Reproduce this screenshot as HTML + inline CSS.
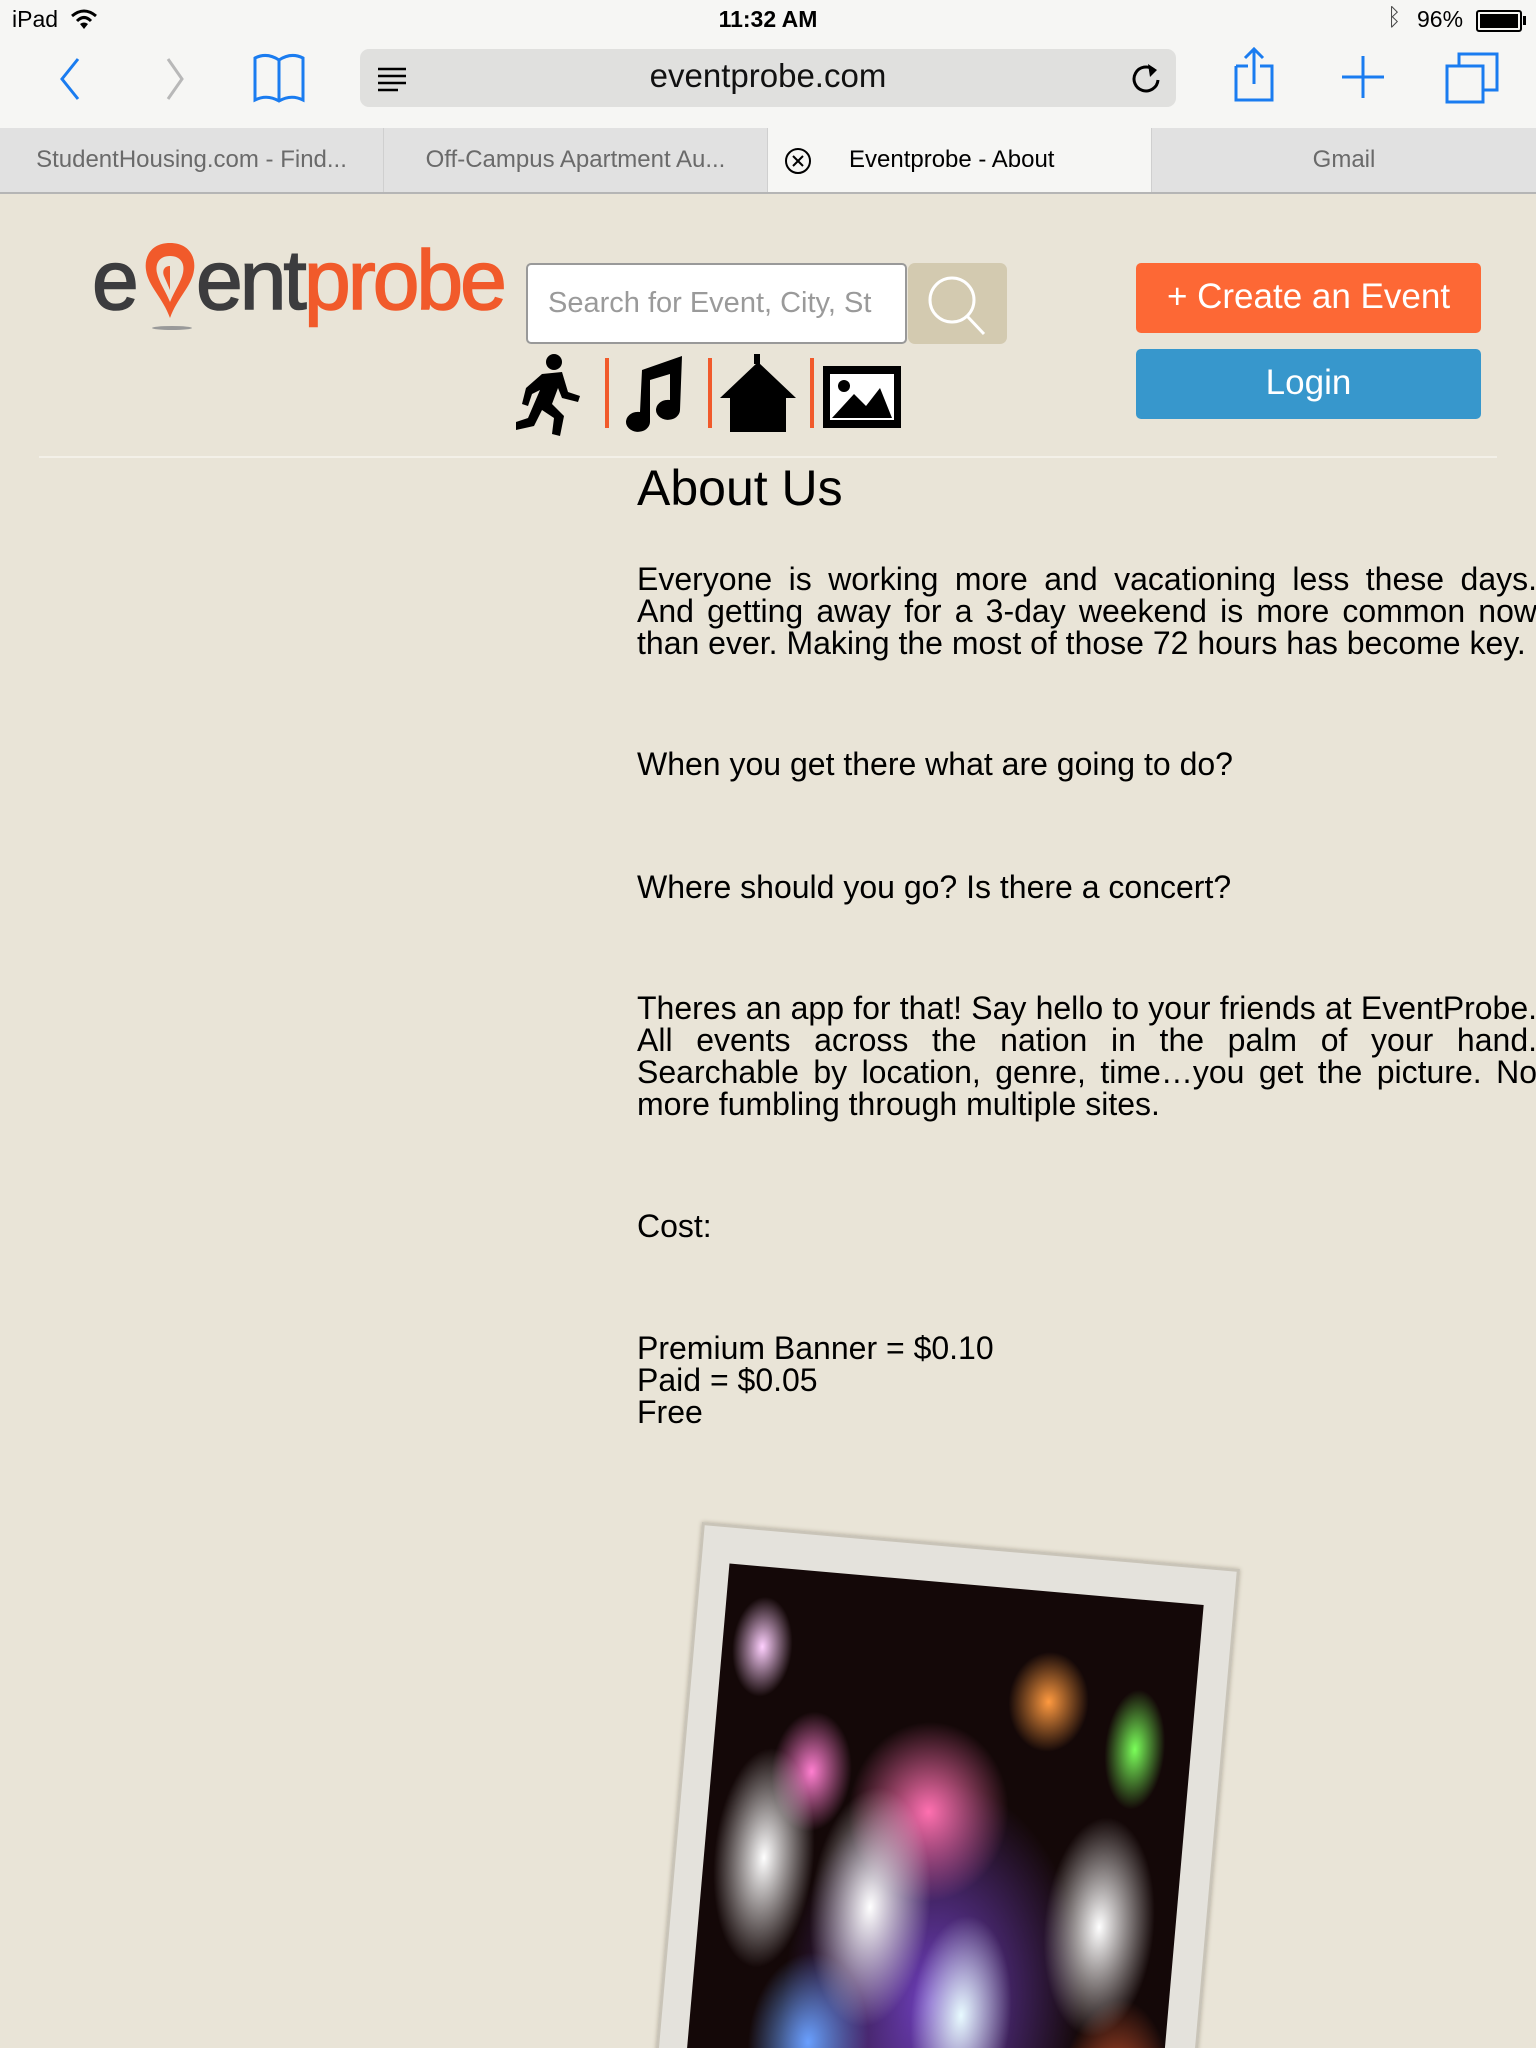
<!DOCTYPE html>
<html><head><meta charset="utf-8">
<style>
*{margin:0;padding:0;box-sizing:border-box}
html,body{width:1536px;height:2048px;overflow:hidden}
body{background:#e9e4d7;font-family:"Liberation Sans",Arial,sans-serif;position:relative;color:#000}
.abs{position:absolute}
#chrome{left:0;top:0;width:1536px;height:128px;background:#f6f6f4}
#tabs{left:0;top:128px;width:1536px;height:66px;background:#e1e1e1;border-bottom:2px solid #b5b5b5}
.tab{position:absolute;top:0;height:64px;line-height:64px;font-size:24px;color:#6a6a6a;text-align:center;border-right:1px solid #cfcfcf}
.p{position:absolute;left:637px;width:900px;font-size:32px;line-height:32px}
.j{text-align:justify;text-align-last:justify;display:block}
.lg{position:absolute;top:238px;font-size:84px;line-height:84px;letter-spacing:-3px;-webkit-text-stroke:1.5px currentColor;white-space:nowrap}
</style></head><body>
<div id="chrome" class="abs">
  <div class="abs" style="left:12px;top:6px;font-size:23px">iPad</div>
  <svg class="abs" style="left:70px;top:8px" width="28" height="24" viewBox="0 0 28 24"><path d="M2 8 Q14 -2 26 8" stroke="#000" stroke-width="3" fill="none"/><path d="M7 13 Q14 6 21 13" stroke="#000" stroke-width="3" fill="none"/><path d="M14 21 L10 16 Q14 13 18 16 Z" fill="#000"/></svg>
  <div class="abs" style="left:0;width:1536px;top:6px;text-align:center;font-size:23px;font-weight:bold">11:32 AM</div>
  <div class="abs" style="left:1387px;top:4px;font-size:24px;color:#444">&#x16D2;</div>
  <div class="abs" style="left:1417px;top:6px;font-size:23px">96%</div>
  <div class="abs" style="left:1476px;top:10px;width:46px;height:22px;border:2px solid #000;border-radius:3px;padding:2px"><div style="width:100%;height:100%;background:#000"></div></div>
  <div class="abs" style="left:1523px;top:16px;width:3px;height:9px;background:#000"></div>
  <svg class="abs" style="left:50px;top:55px" width="90" height="50"><path d="M28 4 L12 24 L28 44" stroke="#1a7cf0" stroke-width="3" fill="none"/></svg>
  <svg class="abs" style="left:160px;top:55px" width="30" height="50"><path d="M8 4 L22 24 L8 44" stroke="#b8b8b8" stroke-width="3" fill="none"/></svg>
  <svg class="abs" style="left:252px;top:52px" width="56" height="52"><path d="M3 6 Q15 0 27 8 Q39 0 51 6 L51 48 Q39 42 27 49 Q15 42 3 48 Z M27 8 L27 49" stroke="#1a7cf0" stroke-width="3" fill="none"/></svg>
  <div class="abs" style="left:360px;top:49px;width:816px;height:58px;background:#e0e0de;border-radius:9px"></div>
  <svg class="abs" style="left:376px;top:66px" width="32" height="26"><path d="M2 3H30M2 10H30M2 17H30M2 24H22" stroke="#000" stroke-width="2.5"/></svg>
  <div class="abs" style="left:360px;width:816px;top:57px;text-align:center;font-size:33px;color:#111">eventprobe.com</div>
  <svg class="abs" style="left:1128px;top:60px" width="36" height="36"><path d="M26 10 A12 12 0 1 0 30 20" stroke="#000" stroke-width="3" fill="none"/><path d="M20 4 L29 10 L22 17" fill="#000"/></svg>
  <svg class="abs" style="left:1230px;top:46px" width="48" height="60"><path d="M6 20 L6 54 L42 54 L42 20 L30 20 M18 20 L6 20" stroke="#1a7cf0" stroke-width="3" fill="none"/><path d="M24 4 L24 38 M15 12 L24 3 L33 12" stroke="#1a7cf0" stroke-width="3" fill="none"/></svg>
  <svg class="abs" style="left:1340px;top:54px" width="46" height="46"><path d="M23 2 V44 M2 23 H44" stroke="#1a7cf0" stroke-width="3"/></svg>
  <svg class="abs" style="left:1445px;top:50px" width="56" height="56"><rect x="2" y="16" width="36" height="36" stroke="#1a7cf0" stroke-width="3" fill="#f6f6f4"/><path d="M14 16 V4 H52 V40 H38" stroke="#1a7cf0" stroke-width="3" fill="none"/></svg>
</div>
<div id="tabs" class="abs">
  <div class="tab" style="left:0;width:384px">StudentHousing.com - Find...</div>
  <div class="tab" style="left:384px;width:384px">Off-Campus Apartment Au...</div>
  <div class="tab" style="left:768px;width:384px;background:#f6f6f4;color:#000;text-align:left;padding-left:81px">Eventprobe - About</div>
  <svg class="abs" style="left:783px;top:18px" width="30" height="30"><circle cx="15" cy="15" r="12" stroke="#000" stroke-width="2" fill="none"/><path d="M10 10 L20 20 M20 10 L10 20" stroke="#000" stroke-width="2"/></svg>
  <div class="tab" style="left:1152px;width:384px;border:none">Gmail</div>
</div>

<!-- logo -->
<div class="lg" style="left:92px;color:#3c3c3e">e</div>
<div class="lg" style="left:196px;color:#3c3c3e">ent</div>
<div class="lg" style="left:304px;color:#f15a2b">probe</div>
<svg class="abs" style="left:142px;top:240px" width="56" height="92"><path d="M28 3 C9 3 2 17 4 30 C6 46 21 58 28 78 C35 58 50 46 52 30 C54 17 47 3 28 3 Z" fill="#f15a2b"/><path d="M28 16 C17 16 13 24 15 33 C17 42 23 50 28 62 C33 50 39 42 41 33 C43 24 39 16 28 16 Z" fill="#e9e4d7"/><path d="M28 26 C22 26 20 31 22 36 L28 50 L28 26Z" fill="#f15a2b"/><ellipse cx="30" cy="88" rx="20" ry="2" fill="#999"/></svg>

<!-- search -->
<div class="abs" style="left:526px;top:263px;width:381px;height:81px;background:#fff;border:2px solid #999;border-radius:5px;font-size:29px;color:#9a9a9a;line-height:77px;padding-left:20px;overflow:hidden;white-space:nowrap">Search for Event, City, St</div>
<div class="abs" style="left:908px;top:263px;width:99px;height:81px;background:#d3cab0;border-radius:7px"></div>
<svg class="abs" style="left:920px;top:270px" width="80" height="70"><circle cx="32" cy="30" r="22" stroke="#fff" stroke-width="3" fill="none"/><path d="M47 46 L64 64" stroke="#fff" stroke-width="3"/></svg>

<!-- category icons -->
<svg class="abs" style="left:514px;top:352px" width="400" height="86" viewBox="0 0 400 86">
  <circle cx="40" cy="10" r="8" fill="#000"/>
  <path d="M28 22 L48 20 L54 40 L66 44 L64 50 L48 46 L44 36 L38 52 L50 64 L46 84 L38 82 L40 66 L28 58 L20 74 L2 78 L2 70 L14 66 L26 38 L18 42 L14 54 L8 52 L12 36 Z" fill="#000"/>
  <rect x="91" y="6" width="4" height="70" fill="#f15a2b"/>
  <path d="M128 18 L168 4 L166 58 A12 10 0 1 1 156 48 L156 22 L136 28 L136 70 A12 10 0 1 1 126 60 Z" fill="#000"/>
  <rect x="194" y="6" width="4" height="70" fill="#f15a2b"/>
  <path d="M206 46 L244 10 L282 46 L272 46 L272 80 L216 80 L216 46 Z" fill="#000"/><rect x="240" y="2" width="6" height="10" fill="#000"/>
  <rect x="296" y="6" width="4" height="70" fill="#f15a2b"/>
  <rect x="309" y="14" width="78" height="62" fill="#000"/>
  <rect x="316" y="22" width="64" height="46" fill="#fff"/>
  <path d="M318 66 L340 42 L352 54 L366 36 L378 66 Z" fill="#000"/><circle cx="330" cy="34" r="6" fill="#000"/>
</svg>

<!-- buttons -->
<div class="abs" style="left:1136px;top:263px;width:345px;height:70px;background:#fd6835;border-radius:5px;color:#fff;font-size:35px;line-height:68px;text-align:center">+ Create an Event</div>
<div class="abs" style="left:1136px;top:349px;width:345px;height:70px;background:#3797cc;border-radius:5px;color:#fff;font-size:35px;line-height:68px;text-align:center">Login</div>

<div class="abs" style="left:39px;top:456px;width:1458px;height:2px;background:#f3f0e8"></div>

<div class="abs" style="left:637px;top:458px;font-size:50px;line-height:60px">About Us</div>

<div class="p" style="top:563px"><span class="j">Everyone is working more and vacationing less these days.</span><span class="j">And getting away for a 3-day weekend is more common now</span><span style="display:block;white-space:nowrap">than ever. Making the most of those 72 hours has become key.</span></div>
<div class="p" style="top:748px">When you get there what are going to do?</div>
<div class="p" style="top:871px">Where should you go? Is there a concert?</div>
<div class="p" style="top:992px"><span class="j" style="white-space:nowrap;text-align:left">Theres an app for that! Say hello to your friends at EventProbe.</span><span class="j">All events across the nation in the palm of your hand.</span><span class="j">Searchable by location, genre, time…you get the picture. No</span><span style="display:block">more fumbling through multiple sites.</span></div>
<div class="p" style="top:1210px">Cost:</div>
<div class="p" style="top:1332px">Premium Banner = $0.10<br>Paid = $0.05<br>Free</div>

<!-- photo -->
<div class="abs" style="left:0;top:1400px;width:1536px;height:648px;overflow:hidden">
<div class="abs" style="left:702px;top:122px;width:540px;height:720px;background:#e4e2dc;border:3px solid #c9c4b8;transform:rotate(5deg);transform-origin:0 0;box-shadow:0 0 4px #b5ad9c">
  <div style="position:absolute;left:28px;top:36px;width:476px;height:680px;background:#140808;overflow:hidden">
    <div style="position:absolute;left:0;top:0;width:476px;height:680px;background:
      radial-gradient(ellipse 50px 110px at 60px 290px,#ffffff,transparent),
      radial-gradient(ellipse 60px 120px at 170px 330px,#ffffff,transparent),
      radial-gradient(ellipse 55px 110px at 400px 330px,#ffffff,transparent),
      radial-gradient(ellipse 50px 100px at 270px 430px,#e8fbff,transparent),
      radial-gradient(ellipse 40px 60px at 100px 200px,#ff7fd0,transparent),
      radial-gradient(ellipse 40px 50px at 330px 110px,#ff9a40,transparent),
      radial-gradient(ellipse 30px 60px at 420px 150px,#7bff5a,transparent),
      radial-gradient(ellipse 30px 50px at 40px 80px,#ffd0ff,transparent),
      radial-gradient(ellipse 40px 30px at 330px 540px,#ff2d9a,transparent),
      radial-gradient(ellipse 60px 90px at 120px 470px,#6aa0ff,transparent),
      radial-gradient(ellipse 60px 120px at 430px 520px,#ff6a3a,transparent),
      radial-gradient(ellipse 80px 90px at 220px 230px,#ff70b0,transparent),
      radial-gradient(ellipse 150px 220px at 240px 420px,#7040c0,transparent),
      radial-gradient(ellipse 220px 200px at 240px 640px,#5a2070,transparent)"></div>
  </div>
</div>
</div>
</body></html>
